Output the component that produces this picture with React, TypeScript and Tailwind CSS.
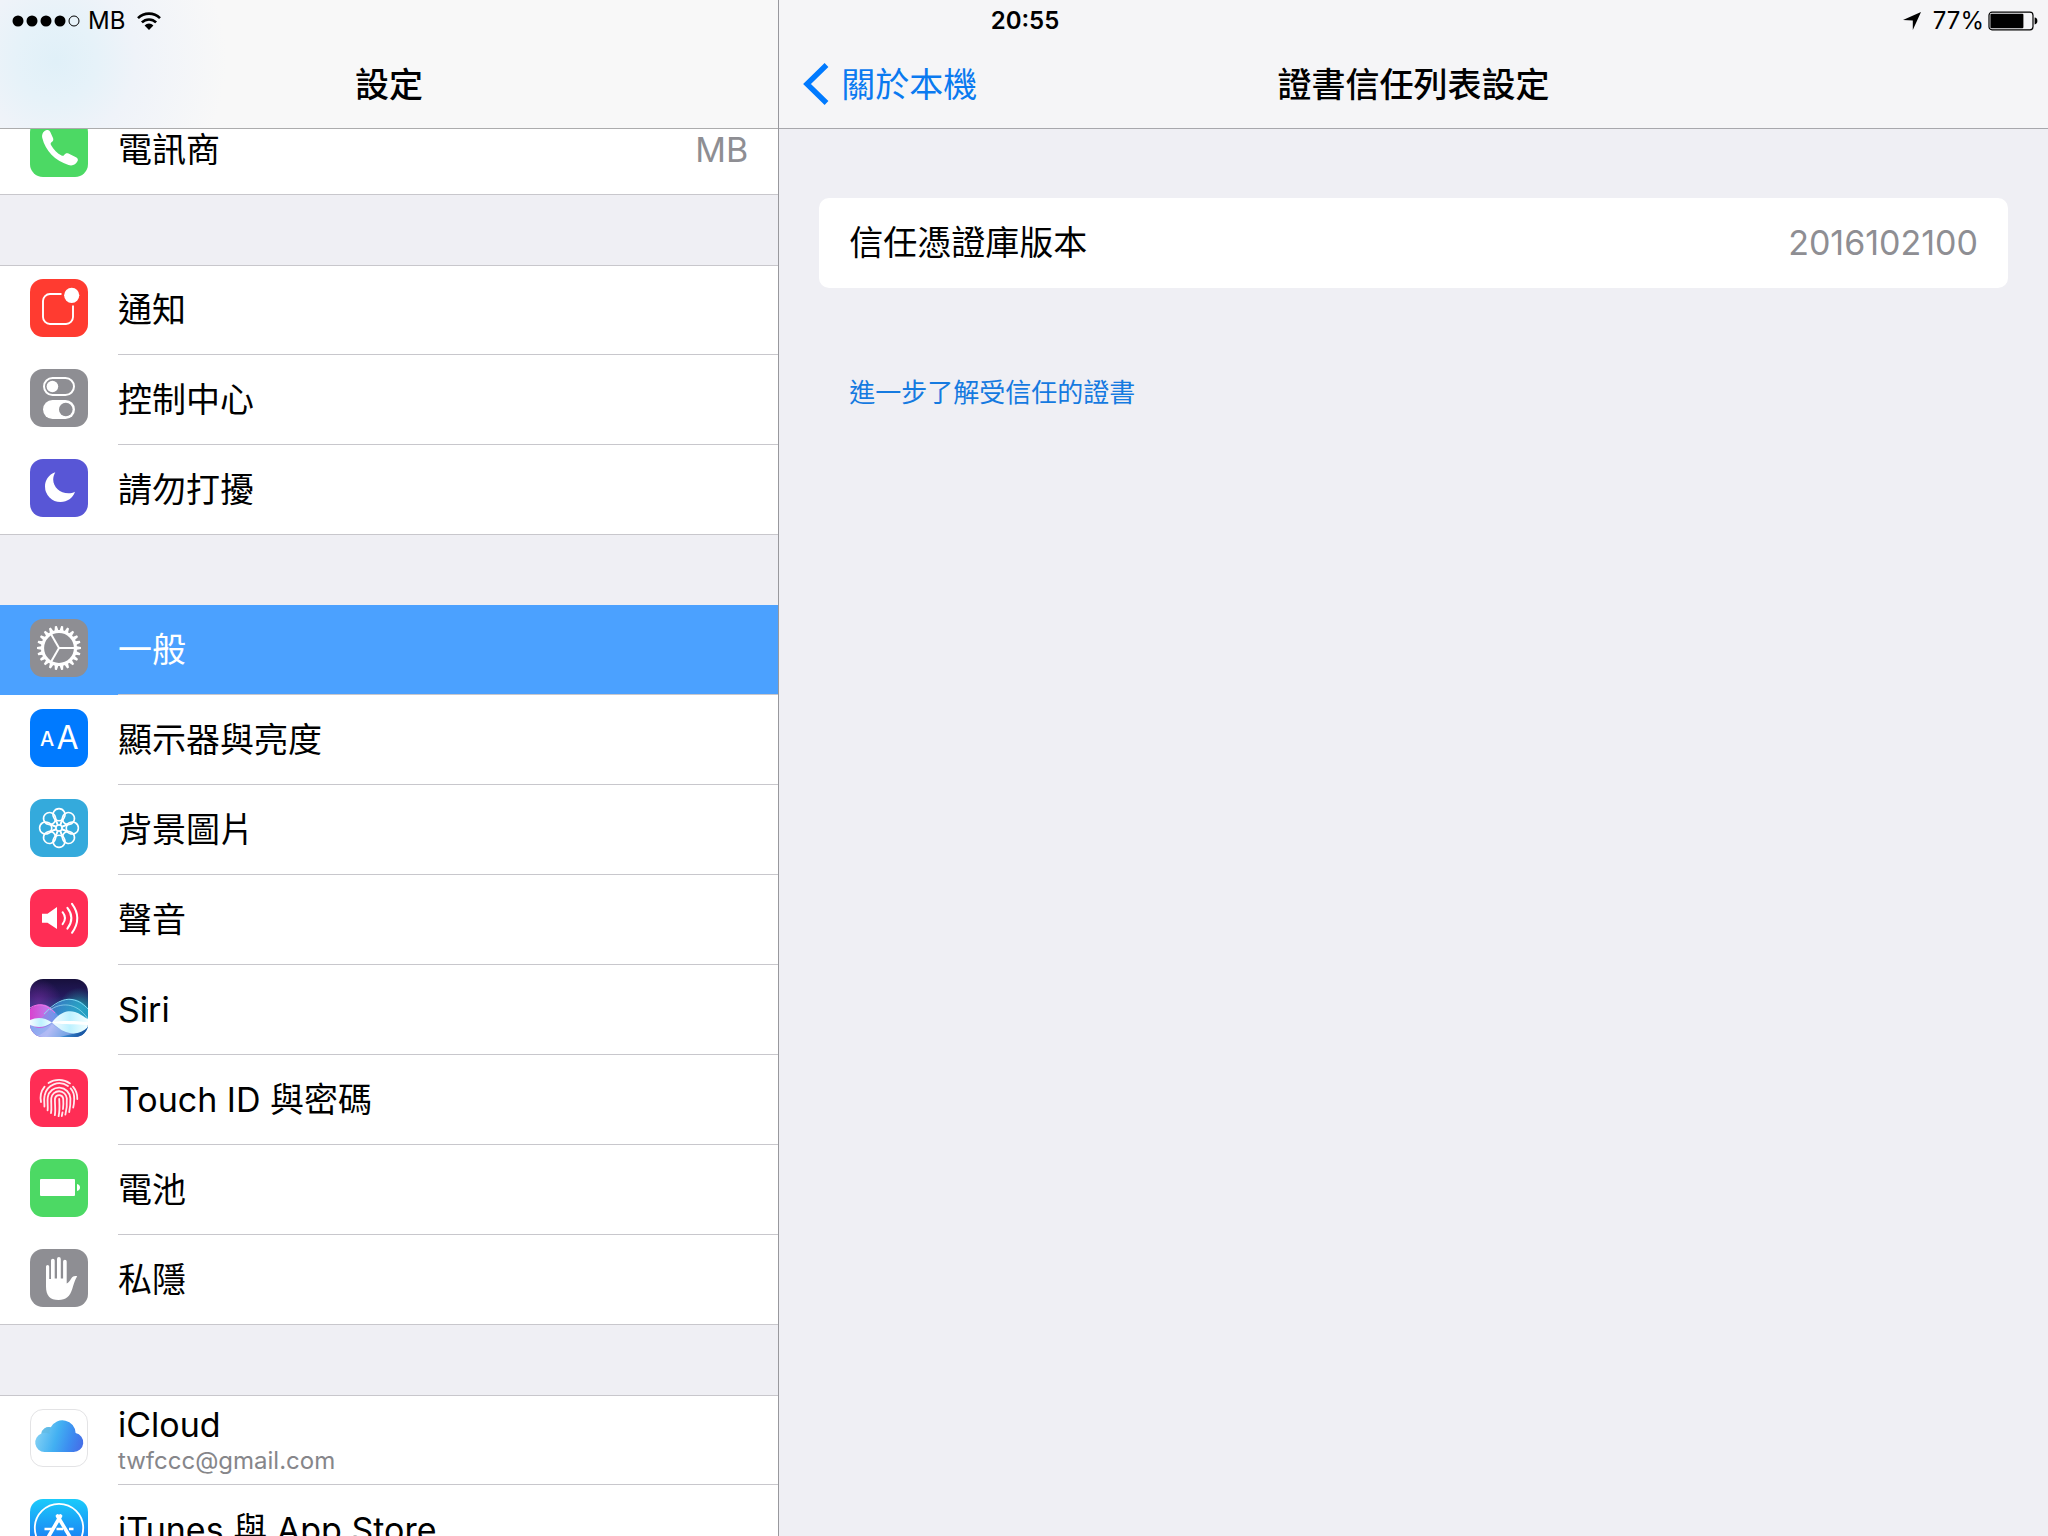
import type { ReactNode } from 'react';

interface SettingsItem {
  id: string;
  label: string;
  icon: ReactNode;
  value?: string;
  detail?: string;
}

const Tile = ({ color, children }: { color: string; children: ReactNode }) => (
  <svg viewBox="0 0 58 58" className="size-[58px]" aria-hidden="true">
    <rect width="58" height="58" rx="13" fill={color} />
    {children}
  </svg>
);

const PhoneIcon = () => (
  <Tile color="#4cd964">
    <path
      fill="#fff"
      d="M16 11.2C18 10.5 19.5 11 20.3 13L23 19C23.8 21 23 22.3 21.5 23.3C20.5 24 20.5 25 21 26C23.5 30.5 27.5 34.5 31.5 36.5C32.5 37 33.4 37 34.2 36C35.3 34.3 36.8 33.8 38.5 34.5L46 38.2C47.8 39 48.3 40.5 47.6 42C46 45.5 42.5 47.2 38.5 46C25 41.5 15.5 32 12.3 19C11.6 15.5 13 12.5 16 11.2Z"
    />
  </Tile>
);

const NotificationsIcon = () => (
  <Tile color="#ff3b30">
    <path
      d="M31.5 15H20a7 7 0 0 0-7 7V38a7 7 0 0 0 7 7H36a7 7 0 0 0 7-7V26.5"
      fill="none"
      stroke="#fff"
      strokeWidth="1.9"
    />
    <circle cx="41.7" cy="16.3" r="7.6" fill="#fff" />
  </Tile>
);

const ControlCenterIcon = () => (
  <Tile color="#8e8e93">
    <rect x="14" y="9" width="30" height="17" rx="8.5" fill="none" stroke="#fff" strokeWidth="2" />
    <circle cx="22.4" cy="17.5" r="5.8" fill="#fff" />
    <rect x="13" y="31" width="32" height="19" rx="9.5" fill="#fff" />
    <circle cx="35.8" cy="40.5" r="6.8" fill="#8e8e93" />
  </Tile>
);

const MoonIcon = () => (
  <Tile color="#5856d6">
    <path
      fill="#fff"
      d="M25.3 13.2C18.5 15.5 15 21.5 15 27.5A15.5 15.5 0 0 0 30.5 43C37.5 43 42.8 39 45 32.8C43 33.8 40.8 34.3 38.5 34.3C30 34.3 23.2 28 23.2 20.5C23.2 18 24 15.5 25.3 13.2Z"
    />
  </Tile>
);

const GearIcon = () => (
  <Tile color="#8e8e93">
    <circle cx="29" cy="29" r="16.5" fill="none" stroke="#fff" strokeWidth="3.2" />
    {Array.from({ length: 22 }, (_, i) => (
      <path
        key={i}
        d="M45.6 26.9L51 28V30L45.6 31.1Z"
        fill="#fff"
        transform={`rotate(${(i * 360) / 22} 29 29)`}
      />
    ))}
    {[0, 120, 240].map((angle) => (
      <path key={angle} d="M29 29H46" stroke="#fff" strokeWidth="2" transform={`rotate(${angle} 29 29)`} />
    ))}
  </Tile>
);

const DisplayIcon = () => (
  <Tile color="#007aff">
    <text x="10" y="36.7" fontSize="20" fontWeight="500" fontFamily="Inter, sans-serif" fill="#fff">A</text>
    <text x="26.4" y="40" fontSize="32" fontFamily="Inter, sans-serif" fill="#fff">A</text>
  </Tile>
);

const WallpaperIcon = () => (
  <Tile color="#34aadc">
    <g fill="none" stroke="#fff" strokeWidth="1.6">
      <circle cx="29" cy="29" r="3" />
      {[0, 45, 90, 135, 180, 225, 270, 315].map((angle) => (
        <path
          key={angle}
          d="M28.2 26.2L23.8 18.6A6 6 0 1 1 34.2 18.6L29.8 26.2M25.4 20.4A6 6 0 0 0 32.6 20.4"
          transform={`rotate(${angle} 29 29)`}
        />
      ))}
    </g>
  </Tile>
);

const SoundIcon = () => (
  <Tile color="#ff2d55">
    <path d="M12 24.7H17.5L27 18V40L17.5 33.7H12Z" fill="#fff" />
    <g fill="none" stroke="#fff" strokeWidth="2" strokeLinecap="round">
      <path d="M32.6 23.2Q37.4 29.2 32.6 35.2" />
      <path d="M37.4 18.8Q45.4 29 37.4 39.6" />
      <path d="M42 14.8Q52.6 29 42 43.8" />
    </g>
  </Tile>
);

const SiriIcon = () => (
  <svg viewBox="0 0 58 58" className="size-[58px]" aria-hidden="true">
    <defs>
      <clipPath id="siri-clip">
        <rect width="58" height="58" rx="13" />
      </clipPath>
      <linearGradient id="siri-sky" x1="0" y1="0" x2="0" y2="1">
        <stop offset="0" stopColor="#17103c" />
        <stop offset="0.3" stopColor="#241a5e" />
        <stop offset="0.5" stopColor="#1b4a86" />
        <stop offset="1" stopColor="#2c6fc4" />
      </linearGradient>
      <radialGradient id="siri-violet" cx="0.15" cy="0.4" r="0.4">
        <stop offset="0" stopColor="#6a2a96" stopOpacity="0.8" />
        <stop offset="1" stopColor="#6a2a96" stopOpacity="0" />
      </radialGradient>
      <radialGradient id="siri-teal" cx="0.85" cy="0.5" r="0.35">
        <stop offset="0" stopColor="#1fa5a5" stopOpacity="0.8" />
        <stop offset="1" stopColor="#1fa5a5" stopOpacity="0" />
      </radialGradient>
      <linearGradient id="siri-pink" x1="0" y1="0" x2="1" y2="0">
        <stop offset="0" stopColor="#d843cf" />
        <stop offset="0.4" stopColor="#b58af2" />
        <stop offset="1" stopColor="#5d6fe0" stopOpacity="0.3" />
      </linearGradient>
      <linearGradient id="siri-blue" x1="0" y1="0" x2="1" y2="0">
        <stop offset="0" stopColor="#8a8fe8" stopOpacity="0.4" />
        <stop offset="0.5" stopColor="#3f9fe4" />
        <stop offset="1" stopColor="#26b0cf" />
      </linearGradient>
      <linearGradient id="siri-deep" x1="0" y1="0" x2="1" y2="0.2">
        <stop offset="0" stopColor="#7f9fee" />
        <stop offset="0.45" stopColor="#9fb4f2" />
        <stop offset="0.7" stopColor="#3f93da" />
        <stop offset="1" stopColor="#1c5aa6" />
      </linearGradient>
      <linearGradient id="siri-glow" x1="0" y1="0" x2="1" y2="0">
        <stop offset="0" stopColor="#f7fbff" />
        <stop offset="0.5" stopColor="#bdf1ff" />
        <stop offset="1" stopColor="#f4ffff" />
      </linearGradient>
    </defs>
    <g clipPath="url(#siri-clip)">
      <rect width="58" height="58" fill="url(#siri-sky)" />
      <rect width="58" height="58" fill="url(#siri-violet)" />
      <rect width="58" height="58" fill="url(#siri-teal)" />
      <path d="M0 30C10 22 18 25 26 34C34 43 42 53 58 58H0Z" fill="url(#siri-pink)" />
      <path d="M0 46C14 42 24 20 40 20C50 20 54 25 58 29V50C44 62 28 58 18 50C12 46 6 44 0 46Z" fill="url(#siri-blue)" opacity="0.7" />
      <path d="M14 35C24 24 34 19 42 20.5C50 22 54 26 58 30" fill="none" stroke="#7fdcf5" strokeWidth="1" />
      <path d="M0 29C9 23 17 26 25 34" fill="none" stroke="#f06fe6" strokeWidth="1" />
      <path d="M20 31C30 24 46 22 58 40" fill="none" stroke="#b5f0ff" strokeWidth="0.8" opacity="0.7" />
      <path d="M0 45C7 51 15 50 22 44C30 37 44 40 58 46V58H0Z" fill="url(#siri-deep)" />
      <path d="M22 45C18 51 12 55 6 58H30C36 56 44 55 50 53C38 54 28 50 22 45Z" fill="#c3c2f7" opacity="0.5" />
      <path d="M0 41C7 38 14 38 22 43.5C14 49 7 49 0 46Z" fill="url(#siri-glow)" />
      <path d="M22 43.5C30 33 38 31 45 33C51 35 55 39 58 40V48C52 54 44 56 36 53C30 51 26 47 22 43.5Z" fill="url(#siri-glow)" />
      <path d="M22 43.5C32 41 46 42 58 43V46C46 45 32 46 22 43.5Z" fill="#fff" />
    </g>
  </svg>
);

const TouchIdIcon = () => (
  <Tile color="#ff2d55">
    <g fill="none" stroke="#fff" strokeOpacity="0.9" strokeWidth="1.8" strokeLinecap="round">
      <path d="M18.5 14A19 19 0 0 1 40 14.4" />
      <path d="M14.6 17.6A18.5 18.5 0 0 0 11 33" />
      <path d="M43 17.6A18.5 18.5 0 0 1 47.3 30" />
      <path d="M14.4 37.5C14.6 34 13.6 31 14.6 26.5A15 15 0 0 1 38 17" />
      <path d="M40.6 19.4C43.6 22.6 44.4 26 44.2 30.5C44.1 34 43.8 36.4 43.2 38.6" />
      <path d="M17.6 41.4C18.2 37 17 32.6 17.8 28A11.4 11.4 0 0 1 40.4 29.4C40.6 34.5 40.2 38.5 39.2 43" />
      <path d="M21 44.2C22 39 20.8 33.5 21.3 29A7.8 7.8 0 0 1 36.8 29.4C37.1 34.5 36.8 40 35.4 45.6" />
      <path d="M24.8 46.2C25.9 41 24.6 34.5 25 29.5A4.2 4.2 0 0 1 33.2 29.5C33.5 33.6 33.4 37 33 40" />
      <path d="M29.2 30C29.5 36 30 41 28.6 47.2" />
      <path d="M32.5 43.4L31.8 47" />
    </g>
  </Tile>
);

const BatteryTileIcon = () => (
  <Tile color="#4cd964">
    <rect x="10" y="20" width="35" height="17" rx="1" fill="#fff" />
    <path d="M47 25Q50 25.6 50 28.5T47 32Z" fill="#fff" />
  </Tile>
);

const PrivacyIcon = () => (
  <Tile color="#8e8e93">
    <path
      fill="#fff"
      d="M16 17.6a1.6 1.6 0 0 1 3.2 0V30h1.8V11.6a1.85 1.85 0 0 1 3.7 0V29.5h2.3V9.9a1.9 1.9 0 0 1 3.8 0V29.5h2.3V12.6a1.8 1.8 0 0 1 3.6 0V34.5C38.5 33.6 40 31.4 41.4 29.2C42.9 27 44.8 26.4 47.2 27.3C45.2 30.4 43.8 35 42.4 39.5C40 47.5 35.8 51 28.6 51C20 51 16 46.6 16 37.5Z"
    />
  </Tile>
);

const ICloudIcon = () => (
  <svg viewBox="0 0 58 58" className="size-[58px]" aria-hidden="true">
    <defs>
      <linearGradient id="cloud-body" x1="0" y1="0.4" x2="1" y2="0.6">
        <stop offset="0" stopColor="#86d2f4" />
        <stop offset="0.45" stopColor="#42b0f2" />
        <stop offset="0.75" stopColor="#3c8cf0" />
        <stop offset="1" stopColor="#4570e8" />
      </linearGradient>
    </defs>
    <rect x="0.5" y="0.5" width="57" height="57" rx="12.5" fill="#fff" stroke="#e3e3e5" />
    <path
      fill="url(#cloud-body)"
      d="M14.5 43A9.5 9.5 0 0 1 11.4 24.6A7.6 7.6 0 0 1 20.8 18.2A13.2 13.2 0 0 1 45.6 24A9.6 9.6 0 0 1 43.6 43Z"
    />
    <path d="M20.8 18.2A13 13 0 0 0 19.6 25A9 9 0 0 0 11.4 24.6A7.6 7.6 0 0 1 20.8 18.2Z" fill="#5fb6dd" opacity="0.55" />
  </svg>
);

const AppStoreIcon = () => (
  <svg viewBox="0 0 58 58" className="size-[58px]" aria-hidden="true">
    <defs>
      <linearGradient id="store-bg" x1="0" y1="0" x2="0" y2="1">
        <stop offset="0" stopColor="#1acbfb" />
        <stop offset="1" stopColor="#1d62f0" />
      </linearGradient>
    </defs>
    <rect width="58" height="58" rx="13" fill="url(#store-bg)" />
    <g fill="none" stroke="#fff">
      <circle cx="29" cy="29" r="24.2" strokeWidth="1.8" />
      <path d="M30.5 17L18 38.5" strokeWidth="3.6" strokeLinecap="round" />
      <path d="M27.5 17L41.5 40.5" strokeWidth="3.6" strokeLinecap="round" />
      <path d="M14.5 30H22M26.5 30H33M39 30H43.5" strokeWidth="2.6" />
    </g>
  </svg>
);

const groups: SettingsItem[][] = [
  [{ id: 'carrier', label: '電訊商', icon: <PhoneIcon />, value: 'MB' }],
  [
    { id: 'notifications', label: '通知', icon: <NotificationsIcon /> },
    { id: 'control', label: '控制中心', icon: <ControlCenterIcon /> },
    { id: 'dnd', label: '請勿打擾', icon: <MoonIcon /> },
  ],
  [
    { id: 'general', label: '一般', icon: <GearIcon /> },
    { id: 'display', label: '顯示器與亮度', icon: <DisplayIcon /> },
    { id: 'wallpaper', label: '背景圖片', icon: <WallpaperIcon /> },
    { id: 'sound', label: '聲音', icon: <SoundIcon /> },
    { id: 'siri', label: 'Siri', icon: <SiriIcon /> },
    { id: 'touchid', label: 'Touch ID 與密碼', icon: <TouchIdIcon /> },
    { id: 'battery', label: '電池', icon: <BatteryTileIcon /> },
    { id: 'privacy', label: '私隱', icon: <PrivacyIcon /> },
  ],
  [
    { id: 'icloud', label: 'iCloud', icon: <ICloudIcon />, detail: 'twfccc@gmail.com' },
    { id: 'store', label: 'iTunes 與 App Store', icon: <AppStoreIcon /> },
  ],
];

function StatusBar() {
  return (
    <div className="absolute inset-x-0 top-0 z-20 grid h-[42px] grid-cols-3 items-center pr-2.5 pl-3 text-2xl">
      <div className="flex items-center">
        <svg viewBox="0 0 68 12" className="h-3 w-[68px]" aria-hidden="true">
          {[6, 20, 34, 48].map((x) => (
            <circle key={x} cx={x} cy="6" r="5.5" />
          ))}
          <circle cx="62" cy="6" r="5" fill="none" stroke="#000" strokeWidth="1" />
        </svg>
        <span className="ml-2">MB</span>
        <svg viewBox="0 0 24 18" className="ml-3 h-[18px] w-6" aria-hidden="true">
          <g fill="none" stroke="#000" strokeWidth="2.6">
            <path d="M1 6.2A15.6 15.6 0 0 1 23 6.2" />
            <path d="M4.9 10.4A10 10 0 0 1 19.1 10.4" />
          </g>
          <path d="M12 18L7.6 13.4A6.2 6.2 0 0 1 16.4 13.4Z" />
        </svg>
      </div>
      <time className="text-center font-semibold">20:55</time>
      <div className="flex items-center justify-end">
        <svg viewBox="0 0 18 18" className="mr-3 size-[18px]" aria-hidden="true">
          <path d="M18 0L9.8 18V8.6L0 8Z" />
        </svg>
        <span>77%</span>
        <svg viewBox="0 0 50 20" className="ml-1 h-5 w-[50px]" aria-hidden="true">
          <rect x="1" y="1.2" width="44" height="17.6" rx="3" fill="none" stroke="#000" strokeWidth="1.2" />
          <rect x="2.4" y="2.8" width="33" height="14.4" rx="1" />
          <path d="M46.6 6.6Q49.4 7 49.4 10T46.6 13.4Z" />
        </svg>
      </div>
    </div>
  );
}

function Row({ item, selected, last }: { item: SettingsItem; selected: boolean; last: boolean }) {
  return (
    <li>
      <button
        type="button"
        className={`flex h-[90px] w-full text-left ${selected ? 'bg-[#4ba1ff] text-white' : ''}`}
      >
        <span className="mx-[30px] mt-3.5 shrink-0">{item.icon}</span>
        <span
          className={`flex h-full min-w-0 flex-1 items-center justify-between pr-[30px] ${
            last ? '' : 'border-b border-[#c8c7cc]'
          }`}
        >
          {item.detail ? (
            <span className="flex flex-col pt-0.5">
              <span className="leading-10">{item.label}</span>
              <span className="text-2xl leading-8 text-[#86868a]">{item.detail}</span>
            </span>
          ) : (
            <span className="leading-10">{item.label}</span>
          )}
          {item.value && <span className="leading-10 text-[#8e8e93]">{item.value}</span>}
        </span>
      </button>
    </li>
  );
}

export default function App() {
  const selectedId = 'general';

  return (
    <div className="relative flex h-screen overflow-hidden bg-[#efeff4] font-['Inter','Noto_Sans_CJK_TC',sans-serif] text-[34px] text-black">
      <StatusBar />

      {/* Sidebar */}
      <nav className="flex w-[38%] flex-col overflow-hidden">
        <header className="relative z-10 flex h-[129px] shrink-0 items-center justify-center border-b border-[#acacad] bg-[#f8f8f8] bg-[radial-gradient(circle_at_56px_60px,#e0f0f8_0,#e6f2f9_40px,#eff3f9_80px,#f8f8f8_170px)] pt-10">
          <h1 className="font-medium">設定</h1>
        </header>
        <div className="-mt-6 flex flex-col gap-[70px]">
          {groups.map((group) => (
            <ul
              key={group[0].id}
              className="bg-white shadow-[inset_0_1px_0_#c8c7cc,inset_0_-1px_0_#c8c7cc]"
            >
              {group.map((item, idx) => (
                <Row
                  key={item.id}
                  item={item}
                  selected={item.id === selectedId}
                  last={idx === group.length - 1}
                />
              ))}
            </ul>
          ))}
        </div>
      </nav>

      <div className="z-10 w-px shrink-0 bg-[#98989d]" />

      {/* Detail pane */}
      <main className="min-w-0 flex-1">
        <header className="grid h-[129px] grid-cols-[1fr_auto_1fr] items-center border-b border-[#a7a7ac] bg-[#f5f5f7] px-6 pt-10">
          <button type="button" className="flex items-center gap-3 text-[#0a7af0]">
            <svg viewBox="0 0 26 42" className="h-[42px] w-[26px]" aria-hidden="true">
              <path d="M23.5 2L4 21L23.5 40" fill="none" stroke="#007aff" strokeWidth="5.4" />
            </svg>
            關於本機
          </button>
          <h2 className="font-medium">證書信任列表設定</h2>
        </header>

        <section className="px-10 pt-[69px]">
          <dl className="flex h-[90px] items-center justify-between rounded-[10px] bg-white px-[30px] pb-0.5">
            <dt>信任憑證庫版本</dt>
            <dd className="text-[#8e8e93]">2016102100</dd>
          </dl>
          <a href="#trusted" className="mx-[30px] mt-[85px] inline-block text-[26px] leading-10 text-[#157ae0]">
            進一步了解受信任的證書
          </a>
        </section>
      </main>
    </div>
  );
}
